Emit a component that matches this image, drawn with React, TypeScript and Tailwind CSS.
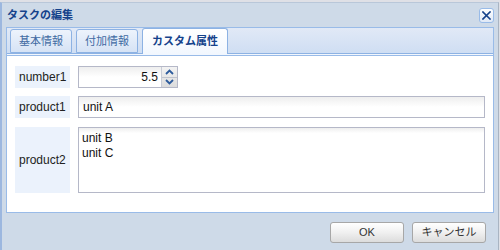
import React from "react";

const font = "font-['Liberation_Sans','Noto_Sans_CJK_JP',sans-serif]";

function Tab({ label, active, w }: { label: string; active?: boolean; w: number }) {
  return (
    <div
      style={{ width: w }}
      className={
        active
          ? "h-[26px] -mb-px relative z-10 rounded-t-[3px] border border-b-0 border-[#8db2e3] bg-gradient-to-b from-[#ffffff] to-[#f2f7fe] flex items-center justify-center text-[11px] font-bold text-[#15428b]"
          : "h-[24px] rounded-t-[3px] border border-[#8db2e3] bg-gradient-to-b from-[#edf3fc] to-[#d6e3f5] flex items-center justify-center text-[11px] text-[#416aa3]"
      }
    >
      {label}
    </div>
  );
}

function Label({ children, h }: { children: React.ReactNode; h: string }) {
  return (
    <div className={`w-[55px] shrink-0 bg-[#ebf2fc] flex items-center pl-[4px] text-[12px] text-[#222] ${h}`}>
      {children}
    </div>
  );
}

export default function App() {
  return (
    <div className={`w-[500px] h-[250px] bg-[#dfe0e6] overflow-hidden ${font}`}>
      <div className="mt-[2px] w-[499px] h-[248px] bg-[#cedae8] border-l-2 border-r border-t border-l-[#9cb7df] border-r-[#a9b4c2] border-t-[#b9c7d9] flex flex-col">
        {/* title bar */}
        <div className="h-[24px] flex items-center justify-between pl-[5px] pr-[4px]">
          <span className="text-[11px] font-bold text-[#15428b] leading-none">タスクの編集</span>
          <div className="w-[15px] h-[15px] rounded-[3px] border border-[#99bbe8] bg-gradient-to-b from-[#ffffff] to-[#dfe8f6] flex items-center justify-center">
            <svg width="9" height="9" viewBox="0 0 9 9">
              <path d="M1 1 L8 8 M8 1 L1 8" stroke="#15428b" strokeWidth="1.6" strokeLinecap="square" />
            </svg>
          </div>
        </div>
        {/* tab panel */}
        <div className="ml-[4px] w-[488px] border border-[#99bbe8] flex flex-col bg-white">
          <div className="h-[26px] bg-gradient-to-b from-[#e1e9f6] to-[#cfdef3] border-b border-[#8db2e3] flex items-end gap-[4px] pl-[3px]">
            <Tab label="基本情報" w={62} />
            <Tab label="付加情報" w={62} />
            <Tab label="カスタム属性" w={86} active />
          </div>
          <div className="h-[2px] bg-[#f2f7fe] border-b border-[#99bbe8]" />
          <div className="h-[156px] px-[8px] pt-[10px] flex flex-col gap-[8px]">
            <div className="flex gap-[8px]">
              <Label h="h-[22px]">number1</Label>
              <div className="w-[100px] h-[22px] border border-[#b5b8c8] bg-gradient-to-b from-[#eeeeee] via-[#ffffff] to-[#ffffff] flex">
                <div className="flex-1 flex items-center justify-end pr-[3px] text-[12px] text-[#111]">5.5</div>
                <div className="w-[16px] h-full bg-gradient-to-b from-[#f3f3f3] to-[#dcdcdc] border-l border-[#c8ccd6] flex flex-col">
                  <div className="flex-1 flex items-center justify-center border-b border-[#c0c4ce]">
                    <svg width="9" height="6" viewBox="0 0 9 6">
                      <path d="M1 5 L4.5 1.5 L8 5" fill="none" stroke="#2d5b9c" strokeWidth="1.8" />
                    </svg>
                  </div>
                  <div className="flex-1 flex items-center justify-center">
                    <svg width="9" height="6" viewBox="0 0 9 6">
                      <path d="M1 1 L4.5 4.5 L8 1" fill="none" stroke="#2d5b9c" strokeWidth="1.8" />
                    </svg>
                  </div>
                </div>
              </div>
            </div>
            <div className="flex gap-[8px]">
              <Label h="h-[22px]">product1</Label>
              <div className="flex-1 h-[22px] border border-[#b5b8c8] bg-gradient-to-b from-[#eeeeee] via-[#ffffff] to-[#ffffff] flex items-center pl-[4px] text-[12px] text-[#111]">
                unit A
              </div>
            </div>
            <div className="flex gap-[8px] pt-px">
              <Label h="h-[66px]">product2</Label>
              <div className="flex-1 h-[66px] border border-[#b5b8c8] bg-gradient-to-b from-[#eeeeee] via-[#ffffff] via-[8%] to-[#ffffff] pl-[3px] pt-[3px] text-[12px] leading-[15px] text-[#111]">
                <div>unit B</div>
                <div>unit C</div>
              </div>
            </div>
          </div>
        </div>
        {/* footer */}
        <div className="flex-1 flex items-start justify-end gap-[8px] pt-[9px] pr-[12px]">
          <div className="w-[74px] h-[21px] rounded-[3px] border border-[#a7a7a7] bg-gradient-to-b from-[#ffffff] via-[#f0f0f0] via-50% to-[#dcdcdc] flex items-center justify-center text-[11px] text-[#333]">
            OK
          </div>
          <div className="w-[74px] h-[21px] rounded-[3px] border border-[#a7a7a7] bg-gradient-to-b from-[#ffffff] via-[#f0f0f0] via-50% to-[#dcdcdc] flex items-center justify-center text-[11px] text-[#333]">
            キャンセル
          </div>
        </div>
      </div>
    </div>
  );
}
